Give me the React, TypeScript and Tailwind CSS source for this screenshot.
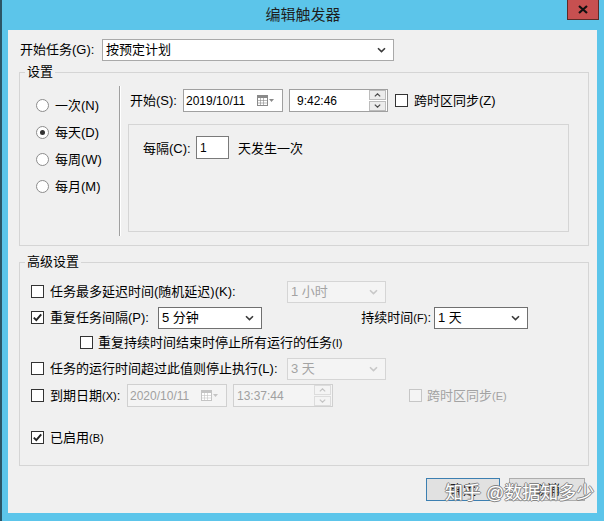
import React from 'react';

const FONT = "font-['Liberation_Sans','Noto_Sans_CJK_SC',sans-serif]";

const Chevron = ({ disabled }: { disabled?: boolean }) => (
  <svg width="9" height="6" viewBox="0 0 9 6" className="shrink-0">
    <path d="M1 1.2 L4.5 4.6 L8 1.2" fill="none" stroke={disabled ? '#c8c8c8' : '#3a3a3a'} strokeWidth="1.6" />
  </svg>
);

const Combo = ({ value, w, disabled, dark }: { value: string; w: string; disabled?: boolean; dark?: boolean }) => (
  <div
    className={`${w} h-[22px] flex items-center justify-between pl-[3px] pr-[7px] border shrink-0 ${
      disabled ? 'bg-[#f4f4f4] border-[#d5d5d5] text-[#a3a3a3]' : dark ? 'bg-white border-[#707070]' : 'bg-white border-[#a9a9a9]'
    }`}
  >
    <span>{value}</span>
    <Chevron disabled={disabled} />
  </div>
);

const CalendarIcon = ({ disabled }: { disabled?: boolean }) => {
  const c = disabled ? '#c4c4c4' : '#8a8a8a';
  return (
    <svg width="18" height="11" viewBox="0 0 18 11" className="shrink-0">
      <rect x="0.5" y="0.5" width="10" height="10" fill="#fff" stroke={c} />
      <rect x="0.5" y="0.5" width="10" height="2.5" fill={c} />
      <path d="M3.5 3 V10 M6.5 3 V10 M1 5.5 H10 M1 8 H10" stroke={c} strokeWidth="0.6" />
      <path d="M12 4 L17 4 L14.5 7 Z" fill={c} />
    </svg>
  );
};

const Spinner = ({ disabled }: { disabled?: boolean }) => {
  const c = disabled ? '#c4c4c4' : '#4a4a4a';
  const b = disabled ? 'border-[#dcdcdc] bg-[#f4f4f4]' : 'border-[#bcbcbc] bg-[#ececec]';
  return (
    <div className="flex flex-col w-[17px] h-[21px] gap-px shrink-0">
      <div className={`flex-1 flex items-center justify-center border ${b}`}>
        <svg width="7" height="4" viewBox="0 0 7 4">
          <path d="M0.8 3.4 L3.5 0.8 L6.2 3.4" fill="none" stroke={c} strokeWidth="1.2" />
        </svg>
      </div>
      <div className={`flex-1 flex items-center justify-center border ${b}`}>
        <svg width="7" height="4" viewBox="0 0 7 4">
          <path d="M0.8 0.6 L3.5 3.2 L6.2 0.6" fill="none" stroke={c} strokeWidth="1.2" />
        </svg>
      </div>
    </div>
  );
};

const Check = ({ checked, disabled }: { checked?: boolean; disabled?: boolean }) => (
  <span
    className={`w-[13px] h-[13px] border flex items-center justify-center shrink-0 ${
      disabled ? 'border-[#c6c6c6] bg-[#f4f4f4]' : 'border-[#333333] bg-white'
    }`}
  >
    {checked && (
      <svg width="11" height="11" viewBox="0 0 11 11">
        <path d="M1.8 5.6 L4.3 8.2 L9.2 2.4" fill="none" stroke="#222" strokeWidth="1.9" />
      </svg>
    )}
  </span>
);

const Radio = ({ checked, label }: { checked?: boolean; label: string }) => (
  <div className="h-[27px] flex items-center gap-[6px]">
    <span className="w-[13px] h-[13px] rounded-full border border-[#8c8c8c] bg-white flex items-center justify-center shrink-0">
      {checked && <span className="w-[5px] h-[5px] rounded-full bg-[#333]" />}
    </span>
    <span>{label}</span>
  </div>
);

const Small = ({ children }: { children: React.ReactNode }) => <span className="text-[11px]">{children}</span>;

export default function App() {
  return (
    <div className={`relative w-[604px] h-[521px] bg-[#5cc5ea] border-l-2 border-[#2c5566] flex flex-col ${FONT}`}>
      <div className="h-[30px] flex items-center justify-center text-[15px] text-[#1e1e1e] shrink-0">编辑触发器</div>
      <div className="absolute right-[5px] top-0 w-[32px] h-[20px] bg-[#c75050] border border-[#5c2b27] border-t-0 flex items-center justify-center">
        <svg width="10" height="9" viewBox="0 0 10 9">
          <path d="M1 1 L9 8 M9 1 L1 8" stroke="#111" strokeWidth="2.2" />
        </svg>
      </div>

      <div className="ml-[6px] mr-[7px] mb-[8px] flex-1 bg-[#f0f0f0] text-[13px] text-black flex flex-col">
        <div className="flex items-center pt-[9px] pl-[12px]">
          <span className="w-[82px]">开始任务(G):</span>
          <Combo value="按预定计划" w="w-[292px]" />
        </div>

        <fieldset className="mt-[3px] ml-[11px] w-[570px] border border-[#d5d5d5] p-0 min-w-0">
          <legend className="ml-[5px] px-[2px] leading-4">设置</legend>
          <div className="flex pt-[6px] pb-[9px]">
            <div className="w-[99px] pl-[16px] pt-[6px] flex flex-col">
              <Radio label="一次(N)" />
              <Radio label="每天(D)" checked />
              <Radio label="每周(W)" />
              <Radio label="每月(M)" />
            </div>
            <div className="w-[2px] h-[150px] border-l border-[#a0a0a0] bg-white" />
            <div className="ml-[7px] pt-[3px] flex flex-col">
              <div className="h-[23px] flex items-center">
                <span className="w-[55px] pl-[2px]">开始(S):</span>
                <div className="w-[100px] h-[23px] border border-[#a0a0a0] bg-white flex items-center justify-between pl-[2px] pr-[7px]">
                  <span className="text-[12px]">2019/10/11</span>
                  <CalendarIcon />
                </div>
                <div className="ml-[6px] w-[99px] h-[23px] border border-[#a0a0a0] bg-white flex items-center justify-between pl-[7px] pr-px">
                  <span className="text-[12px]">9:42:46</span>
                  <Spinner />
                </div>
                <span className="ml-[7px]"><Check /></span>
                <span className="ml-[6px]">跨时区同步(Z)</span>
              </div>
              <div className="mt-[12px] w-[441px] h-[108px] border border-[#d5d5d5] pt-[11px] pl-[14px]">
                <div className="flex items-center">
                  <span className="w-[53px] pt-[3px]">每隔(C):</span>
                  <div className="w-[33px] h-[23px] border border-[#7a7a7a] bg-white pl-[3px] flex items-center">
                    <span className="text-[12px]">1</span>
                  </div>
                  <span className="ml-[9px] pt-[3px]">天发生一次</span>
                </div>
              </div>
            </div>
          </div>
        </fieldset>

        <fieldset className="mt-[8px] ml-[11px] w-[570px] border border-[#d5d5d5] p-0 min-w-0">
          <legend className="ml-[5px] px-[2px] leading-4">高级设置</legend>
          <div className="flex flex-col pl-[11px] pt-[10px] pb-[16px]">
            <div className="h-[23px] flex items-center">
              <div className="w-[256px] flex items-center gap-[6px]">
                <Check />
                <span>任务最多延迟时间(随机延迟)(K):</span>
              </div>
              <Combo value="1 小时" w="w-[99px]" disabled />
            </div>

            <div className="mt-[3px] h-[23px] flex items-center">
              <div className="w-[127px] flex items-center gap-[6px]">
                <Check checked />
                <span>重复任务间隔(P):</span>
              </div>
              <Combo value="5 分钟" w="w-[104px]" dark />
              <div className="w-[172px] flex justify-end pr-[3px]">
                <span>持续时间<Small>(F)</Small>:</span>
              </div>
              <Combo value="1 天" w="w-[94px]" dark />
            </div>

            <div className="mt-[2px] h-[23px] flex items-center pl-[49px] gap-[5px]">
              <Check />
              <span>重复持续时间结束时停止所有运行的任务<Small>(I)</Small></span>
            </div>

            <div className="mt-[3px] h-[23px] flex items-center">
              <div className="w-[256px] flex items-center gap-[6px]">
                <Check />
                <span>任务的运行时间超过此值则停止执行(L):</span>
              </div>
              <Combo value="3 天" w="w-[99px]" disabled />
            </div>

            <div className="mt-[4px] h-[23px] flex items-center">
              <div className="w-[96px] flex items-center gap-[6px]">
                <Check />
                <span>到期日期<Small>(X)</Small>:</span>
              </div>
              <div className="w-[100px] h-[23px] border border-[#d0d0d0] bg-[#f4f4f4] flex items-center justify-between pl-[2px] pr-[7px] text-[#a0a0a0]">
                <span className="text-[12px]">2020/10/11</span>
                <CalendarIcon disabled />
              </div>
              <div className="ml-[6px] w-[100px] h-[23px] border border-[#d0d0d0] bg-[#f4f4f4] flex items-center justify-between pl-[3px] pr-px text-[#a0a0a0]">
                <span className="text-[12px]">13:37:44</span>
                <Spinner disabled />
              </div>
              <span className="ml-[76px]"><Check disabled /></span>
              <span className="ml-[5px] text-[#a3a3a3]">跨时区同步<Small>(E)</Small></span>
            </div>

            <div className="mt-[19px] h-[23px] flex items-center gap-[6px]">
              <Check checked />
              <span>已启用<Small>(B)</Small></span>
            </div>
          </div>
        </fieldset>

        <div className="mt-[12px] flex justify-end gap-[9px] pr-[12px]">
          <button className="w-[74px] h-[23px] bg-[#e1e1e1] border border-[#3c7fb1]">确定</button>
          <button className="w-[76px] h-[23px] bg-[#e1e1e1] border border-[#adadad]">取消</button>
        </div>
      </div>

      <div className="absolute left-[443px] top-[480px] text-[18px] text-white [text-shadow:1px_0_#858585,-1px_0_#858585,0_1px_#858585,0_-1px_#858585] pointer-events-none whitespace-nowrap">
        知乎 @数据知多少
      </div>
    </div>
  );
}
